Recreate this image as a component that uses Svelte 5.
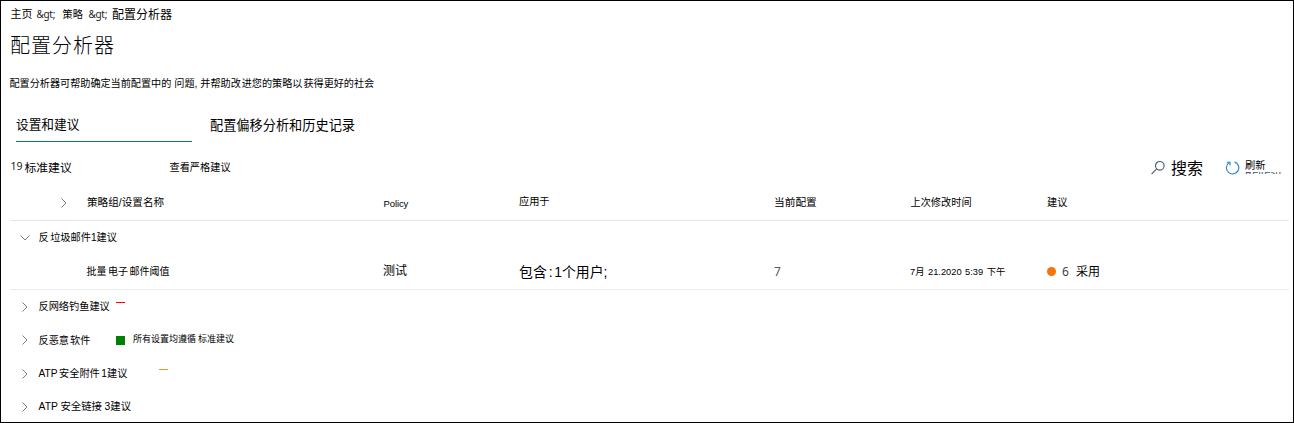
<script>
  const groups = [
    { parts: ['反', '网络钓鱼建议'], cls: 'phish', mark: 'dash red' },
    { parts: ['反恶意', '软件'], cls: 'malware', mark: 'square', note: ['所有设置均遵循', '标准建议'] },
    { parts: ['ATP', '安全附件', '1建议'], cls: 'attach', mark: 'dash orange' },
    { parts: ['ATP', '安全链接', '3建议'], cls: 'links' },
  ];
</script>

{#snippet chevron(down)}
  <svg class="chevron" class:down viewBox="0 0 10 10" width="10" height="10" fill="none">
    <path d="M2.5 0.5 L7 5 L2.5 9.5" stroke="currentColor" stroke-width="1" />
  </svg>
{/snippet}

<main>
  <nav class="crumbs">
    <span class="c1">主页</span><span class="gt g1">&amp;gt;</span><span class="c2">策略</span><span class="gt g2">&amp;gt;</span><span class="c3">配置分析器</span>
  </nav>
  <h1>配置分析器</h1>
  <p class="desc">
    <span>配置分析器可帮助确定当前配置中的</span><span class="d2">问题,</span><span class="d3">并帮助改</span><span class="d4">进您的策略以</span><span class="d5">获得更好的社会</span>
  </p>

  <div class="tabs">
    <div class="tab active">设置和建议</div>
    <div class="tab">配置偏移分析和历史记录</div>
  </div>

  <div class="toolbar">
    <span class="count"><b>19</b><span>标准建议</span></span>
    <span class="strict">查看严格建议</span>
    <div class="search">
      <svg width="15" height="15" viewBox="0 0 15 15" fill="none" stroke-width="1.1">
        <circle cx="8.8" cy="5.8" r="4.3" stroke="#425a70" />
        <path d="M5.7 8.9 L0.6 14" stroke="#526476" />
      </svg>
      <span>搜索</span>
    </div>
    <div class="refresh">
      <svg width="15" height="15" viewBox="0 0 15 15" fill="none" stroke="#2886cf" stroke-width="1.15">
        <path d="M9.5 1.9 A6.2 6.2 0 1 1 3.9 2.8" />
        <path d="M1.7 2.2 H5 V5.5" />
      </svg>
      <div class="label"><span>刷新</span><i>Refresh</i></div>
    </div>
  </div>

  <div class="row head">
    <span class="name">{@render chevron(false)}<span>策略组/设置名称</span></span>
    <span class="policy">Policy</span>
    <span class="scope">应用于</span>
    <span class="current">当前配置</span>
    <span class="modified">上次修改时间</span>
    <span class="advice">建议</span>
  </div>

  <div class="group first">
    {@render chevron(true)}
    <span class="title spam"><span>反</span><span>垃圾邮件1建议</span></span>
  </div>

  <div class="row detail">
    <span class="name setting"><span>批量</span><span>电子</span><span>邮件阈值</span></span>
    <span class="test">测试</span>
    <span class="applied">包含<em>:</em>1个用户;</span>
    <span class="value">7</span>
    <span class="date"><span>7月</span><span>21.2020</span><span>5:39</span><span>下午</span></span>
    <span class="adopt"><i></i><b>6</b><span>采用</span></span>
  </div>

  {#each groups as g}
    <div class="group {g.cls}">
      {@render chevron(false)}
      <span class="title">{#each g.parts as p}<span>{p}</span>{/each}</span>
      {#if g.mark}<i class="mark {g.mark}"></i>{/if}
      {#if g.note}<span class="note">{#each g.note as n}<span>{n}</span>{/each}</span>{/if}
    </div>
  {/each}
</main>

<style>
  :global(body) { margin: 0; background: #fff; }
  main {
    box-sizing: border-box; width: 1294px; height: 423px; overflow: hidden;
    border: 1px solid #000; background: #fff; color: #000;
    font-family: "Liberation Sans", "Noto Sans CJK SC", sans-serif;
    font-size: 10.2px; white-space: nowrap;
  }
  main :is(b, i, em) { font-weight: 400; font-style: normal; }

  .crumbs { display: flex; align-items: center; height: 26px; padding-left: 9.5px; line-height: 26px; }
  .c1 { width: 26px; font-size: 11px; }
  .gt { font-family: "Noto Sans", sans-serif; font-size: 10px; color: #222; letter-spacing: -0.3px; }
  .g1 { width: 26px; }
  .c2 { width: 26px; padding-top: 1px; }
  .g2 { width: 23.5px; }
  .c3 { font-size: 12px; padding-top: 1px; }
  h1 {
    box-sizing: border-box; margin: 0; height: 36px; padding: 1px 0 0 9px; line-height: 36px;
    font-size: 20px; font-weight: 300; letter-spacing: 1px;
  }
  .desc { display: flex; margin: 0; height: 39px; padding: 1px 0 0 8.5px; line-height: 39px; font-size: 10.12px; }
  .d2 { margin-left: 3px; }
  .d3 { margin-left: 3px; }
  .d4, .d5 { margin-left: 1px; }

  .tabs { display: flex; height: 39px; gap: 18px; padding-left: 15px; }
  .tab { box-sizing: border-box; height: 39px; padding-top: 6px; line-height: 34px; font-size: 13.2px; }
  .tab.active { width: 176px; padding-top: 5px; font-size: 12.7px; border-bottom: 1px solid #0f6cbd; }

  .toolbar { display: flex; align-items: center; height: 34px; padding: 8px 0 0 9.5px; }
  .count { display: flex; align-items: center; gap: 2px; width: 159px; padding-bottom: 2px; font-size: 11.8px; }
  .count b { font-size: 10.5px; color: #222; font-family: "Noto Sans", sans-serif; }
  .strict { flex: 1; padding-bottom: 1px; }
  .search { display: flex; align-items: center; gap: 5px; width: 74px; font-size: 16px; }
  .refresh { display: flex; align-items: center; gap: 5px; width: 68px; }
  .label { display: flex; flex-direction: column; height: 20px; line-height: 17px; }
  .label span { height: 15px; }
  .label i { height: 2px; overflow: hidden; line-height: 2px; font-size: 10.3px; color: #445a74; }

  .row {
    display: grid; align-items: center; box-sizing: border-box;
    grid-template-columns: 373px 136px 255px 136.5px 136.5px 1fr;
    margin: 0 4px 0 9px; border-bottom: 1px solid #e6e6e6;
  }
  .head { height: 37px; line-height: 34px; padding-bottom: 1px; }
  .name { display: flex; align-items: center; }
  .head .name { padding-left: 48.5px; gap: 18.5px; font-size: 10.6px; }
  .head .name span { padding-bottom: 2px; }
  .chevron { flex: none; color: #7a7a86; }
  .chevron.down { transform: rotate(90deg); }
  .policy { padding: 3px 0 0 0.5px; font-size: 9.5px; letter-spacing: -0.1px; }
  .scope { padding-bottom: 1px; }
  .current { padding-bottom: 2px; font-size: 10.7px; }

  .detail { height: 36px; line-height: 34px; border-color: #ececec; }
  .setting { padding: 1px 0 0 76.5px; gap: 1.5px; font-size: 10px; }
  .test { padding-bottom: 1px; font-size: 12px; }
  .applied { font-size: 13.9px; }
  .applied em { margin: 0 1.5px 0 2px; }
  .value { font-size: 12px; color: #555; font-family: "Noto Sans", sans-serif; }
  .date { display: flex; gap: 3.5px; padding-top: 1px; margin-left: -0.5px; font-size: 9.3px; }
  .adopt { display: flex; align-items: center; font-size: 12px; }
  .adopt i { width: 9px; height: 9px; border-radius: 50%; background: #f7730b; }
  .adopt b { width: 14px; margin-left: 6px; color: #444; font-family: "Noto Sans", sans-serif; }

  .group { display: flex; align-items: center; height: 33px; padding-left: 19px; line-height: 33px; }
  .title { display: flex; gap: 0; margin-left: 8.5px; }
  .spam { gap: 1.5px; }
  .malware { height: 34px; }
  .malware .title { gap: 1px; }
  .attach .title { gap: 1.5px; }
  .links .title { gap: 2.5px; font-size: 10.4px; }
  .mark { flex: none; }
  .dash { width: 9px; height: 1px; margin-top: -8px; }
  .red { margin-left: 6.4px; background: #f00; }
  .orange { margin-left: 32px; background: #f7941d; }
  .square { width: 9px; height: 9px; margin-left: 25.5px; background: #008000; }
  .note { display: flex; gap: 2px; margin-left: 8px; padding-bottom: 1px; font-size: 9px; }
</style>
